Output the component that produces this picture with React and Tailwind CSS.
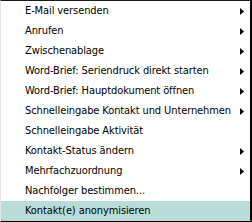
import React from "react";

const items = [
    { label: "E-Mail versenden", sub: true },
    { label: "Anrufen", sub: true },
    { label: "Zwischenablage", sub: true },
    { label: "Word-Brief: Seriendruck direkt starten", sub: true },
    { label: "Word-Brief: Hauptdokument öffnen", sub: true },
    { label: "Schnelleingabe Kontakt und Unternehmen", sub: true },
    { label: "Schnelleingabe Aktivität" },
    { label: "Kontakt-Status ändern", sub: true },
    { label: "Mehrfachzuordnung", sub: true },
    { label: "Nachfolger bestimmen..." },
    { label: "Kontakt(e) anonymisieren", active: true },
];

const Arrow = () => (
    <svg width="4" height="7" viewBox="0 0 4 7" className="block">
        <path d="M0 0 L4 3.5 L0 7 Z" fill="#000" />
    </svg>
);

const App = () => {
    return (
        <div className="w-[252px] h-[222px] bg-white border-t border-l border-t-[#1a1a1a] border-l-[#e4e4e4] border-r-2 border-b border-r-black border-b-black font-['DejaVu_Sans_Condensed','DejaVu_Sans',sans-serif] text-[11px] tracking-[-0.1px] text-black">
            {/* menu entries */}
            {items.map((item) => (
                <div
                    key={item.label}
                    className={`h-[20px] flex items-center justify-between pl-[24px] pr-[6px] ${
                        item.active ? "bg-[#b9dcdb]" : ""
                    }`}
                >
                    <span className="whitespace-nowrap leading-none -mt-[1px]">{item.label}</span>
                    {item.sub && <Arrow />}
                </div>
            ))}
        </div>
    );
};

export default App;
